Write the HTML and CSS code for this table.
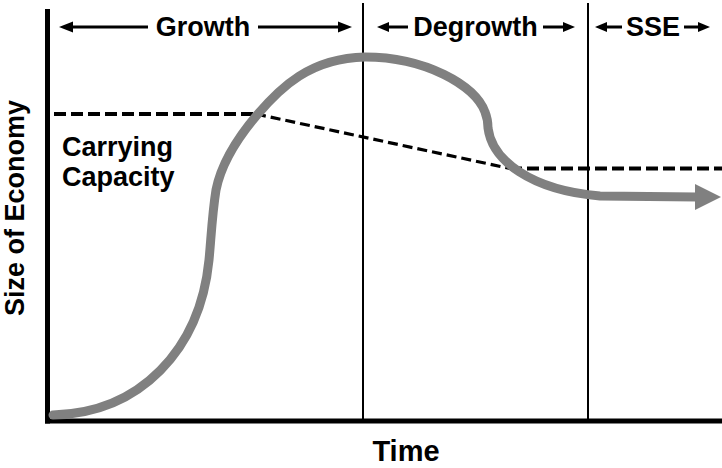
FILE: index.html
```html
<!DOCTYPE html>
<html lang="en">
<head>
<meta charset="utf-8">
<title>Growth, Degrowth and SSE</title>
<link rel="stylesheet" href="styles.css">
</head>
<body>
<figure class="chart">
  <div class="ycell"><span class="ylabel">Size of Economy</span></div>
  <svg class="plot" width="678" height="430" viewBox="44 0 678 430" xmlns="http://www.w3.org/2000/svg">
    <!-- phase dividers -->
    <line class="divider" x1="363" y1="3" x2="363" y2="420"/>
    <line class="divider" x1="588" y1="3" x2="588" y2="420"/>

    <!-- axes -->
    <line class="axis" x1="47.5" y1="9" x2="47.5" y2="423.5"/>
    <line class="axis" x1="45" y1="421" x2="722" y2="421"/>

    <!-- carrying capacity -->
    <path class="capacity" d="M54,114 H256"/>
    <path class="capacity slope" d="M256,114 L510,168.5"/>
    <path class="capacity" d="M510,168.5 H722"/>

    <!-- economy curve -->
    <path class="economy" d="M53,415 C140,413 200,350 209,260 C211,240 212,215 216,190 C222,160 240,135 257,115 C280,88 310,58 365,57 C425,57 475,85 485,112 C487,117 488,122 488,128 C492,160 530,190 600,196 L697,197"/>
    <polygon class="economy-head" points="695,184 721,197 695,210"/>

    <!-- phase arrows -->
    <g class="arrows">
      <line x1="70" y1="27" x2="148" y2="27"/>
      <line x1="258" y1="27" x2="340" y2="27"/>
      <line x1="386" y1="27" x2="408" y2="27"/>
      <line x1="543" y1="27" x2="565" y2="27"/>
      <line x1="604" y1="27" x2="622" y2="27"/>
      <line x1="684" y1="27" x2="700" y2="27"/>
    </g>
    <g class="heads">
      <polygon points="59,27 73,21.5 73,32.5"/>
      <polygon points="352,27 338,21.5 338,32.5"/>
      <polygon points="377,27 389,22 389,32"/>
      <polygon points="575,27 563,22 563,32"/>
      <polygon points="595,27 607,22 607,32"/>
      <polygon points="710,27 698,22 698,32"/>
    </g>

    <text class="lbl" x="203" y="36" text-anchor="middle">Growth</text>
    <text class="lbl" x="475.5" y="36" text-anchor="middle">Degrowth</text>
    <text class="lbl" x="653" y="36" text-anchor="middle">SSE</text>

    <text class="lbl" x="62" y="156">Carrying</text>
    <text class="lbl" x="62" y="186">Capacity</text>
  </svg>
  <div class="xlabel">Time</div>
</figure>
</body>
</html>
```

FILE: styles.css
```css
html, body {
  margin: 0;
  padding: 0;
  background: #ffffff;
}

.chart {
  margin: 0;
  width: 722px;
  height: 468px;
  display: grid;
  grid-template-columns: 44px 678px;
  grid-template-rows: 430px 38px;
  font-family: "Liberation Sans", Arial, sans-serif;
  font-weight: bold;
  color: #000000;
}

.ycell {
  grid-column: 1;
  grid-row: 1;
  display: flex;
  align-items: center;
  padding-bottom: 13px;
  box-sizing: border-box;
}

.ylabel {
  writing-mode: vertical-rl;
  transform: rotate(180deg);
  font-size: 27px;
  line-height: 30.5px;
  white-space: nowrap;
}

.plot {
  grid-column: 2;
  grid-row: 1;
  display: block;
  overflow: visible;
}

.xlabel {
  grid-column: 2;
  grid-row: 2;
  font-size: 29px;
  line-height: 33px;
  padding-top: 5px;
  padding-left: 46px;
  text-align: center;
}

.divider {
  stroke: #000000;
  stroke-width: 2;
}

.axis {
  stroke: #000000;
  stroke-width: 5;
}

.capacity {
  fill: none;
  stroke: #000000;
  stroke-width: 4;
  stroke-dasharray: 12 5;
}

.capacity.slope {
  stroke-width: 3.2;
  stroke-dasharray: 10 5;
}

.economy {
  fill: none;
  stroke: #808080;
  stroke-width: 9;
  stroke-linecap: round;
  stroke-linejoin: round;
}

.economy-head {
  fill: #808080;
}

.arrows line {
  stroke: #000000;
  stroke-width: 3;
}

.heads polygon {
  fill: #000000;
}

.lbl {
  font-family: "Liberation Sans", Arial, sans-serif;
  font-weight: bold;
  font-size: 27px;
  fill: #000000;
}
```
